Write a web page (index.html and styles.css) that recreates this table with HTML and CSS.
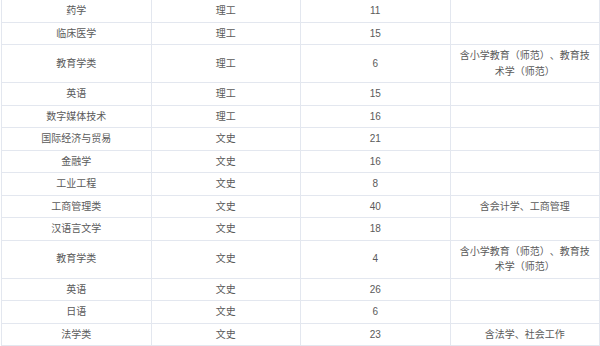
FILE: index.html
```html
<!DOCTYPE html>
<html lang="zh-CN">
<head>
  <meta charset="UTF-8">
  <meta name="viewport" content="width=device-width, initial-scale=1.0">
  <title>招生计划</title>
  <link rel="stylesheet" href="styles.css">
</head>
<body>
  <table class="plan">
    <colgroup>
      <col><col><col><col>
    </colgroup>
    <tbody>
      <tr><td>药学</td><td>理工</td><td>11</td><td></td></tr>
      <tr><td>临床医学</td><td>理工</td><td>15</td><td></td></tr>
      <tr><td>教育学类</td><td>理工</td><td>6</td><td>含小学教育（师范）、教育技术学（师范）</td></tr>
      <tr><td>英语</td><td>理工</td><td>15</td><td></td></tr>
      <tr><td>数字媒体技术</td><td>理工</td><td>16</td><td></td></tr>
      <tr><td>国际经济与贸易</td><td>文史</td><td>21</td><td></td></tr>
      <tr><td>金融学</td><td>文史</td><td>16</td><td></td></tr>
      <tr><td>工业工程</td><td>文史</td><td>8</td><td></td></tr>
      <tr><td>工商管理类</td><td>文史</td><td>40</td><td>含会计学、工商管理</td></tr>
      <tr><td>汉语言文学</td><td>文史</td><td>18</td><td></td></tr>
      <tr><td>教育学类</td><td>文史</td><td>4</td><td>含小学教育（师范）、教育技术学（师范）</td></tr>
      <tr><td>英语</td><td>文史</td><td>26</td><td></td></tr>
      <tr><td>日语</td><td>文史</td><td>6</td><td></td></tr>
      <tr><td>法学类</td><td>文史</td><td>23</td><td>含法学、社会工作</td></tr>
    </tbody>
  </table>
</body>
</html>
```

FILE: styles.css
```css
* { box-sizing: border-box; }
body {
  margin: 0;
  padding: 0 0 0 1px;
  background: #fff;
  font-family: "Liberation Sans", "Noto Sans CJK SC", sans-serif;
  color: #5a5a5a;
}
.plan {
  width: 599px;
  margin-top: -1px;
  border-collapse: collapse;
  table-layout: fixed;
  font-size: 10px;
  line-height: 15.5px;
  text-spacing-trim: space-all;
  font-feature-settings: "fwid" 1;
}
.plan col { width: 25%; }
.plan td {
  border: 1px solid #e3e7ef;
  padding: 3px 6px;
  text-align: center;
  vertical-align: middle;
}
```
